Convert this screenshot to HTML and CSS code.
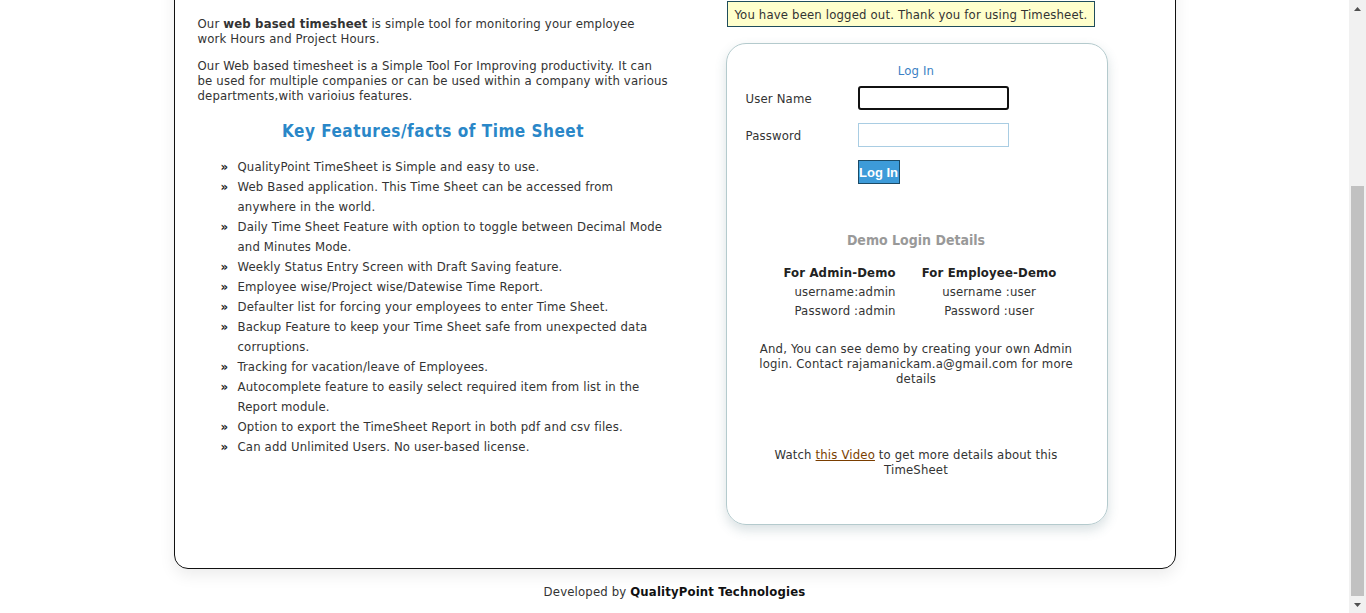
FILE: index.html
```html
<!DOCTYPE html>
<html lang="en">
<head>
<meta charset="utf-8">
<title>QualityPoint TimeSheet - Login</title>
<link rel="stylesheet" href="styles.css">
</head>
<body>
<div class="window">
  <div class="viewport">
    <div class="page">
      <main class="main-box">
        <section class="intro">
          <p class="para p1">Our <b>web based timesheet</b> is simple tool for monitoring your employee<br>work Hours and Project Hours.</p>
          <p class="para p2">Our Web based timesheet is a Simple Tool For Improving productivity. It can be used for multiple companies or can be used within a company with various departments,with varioius features.</p>
          <h2 class="features-title">Key Features/facts of Time Sheet</h2>
          <ul class="features">
            <li>QualityPoint TimeSheet is Simple and easy to use.</li>
            <li>Web Based application. This Time Sheet can be accessed from anywhere in the world.</li>
            <li>Daily Time Sheet Feature with option to toggle between Decimal Mode and Minutes Mode.</li>
            <li>Weekly Status Entry Screen with Draft Saving feature.</li>
            <li>Employee wise/Project wise/Datewise Time Report.</li>
            <li>Defaulter list for forcing your employees to enter Time Sheet.</li>
            <li>Backup Feature to keep your Time Sheet safe from unexpected data corruptions.</li>
            <li>Tracking for vacation/leave of Employees.</li>
            <li>Autocomplete feature to easily select required item from list in the Report module.</li>
            <li>Option to export the TimeSheet Report in both pdf and csv files.</li>
            <li>Can add Unlimited Users. No user-based license.</li>
          </ul>
        </section>
        <aside class="side">
          <div class="message">You have been logged out. Thank you for using Timesheet.</div>
          <div class="login-panel">
            <div class="login-title">Log In</div>
            <form class="login-form">
              <label class="field-label" for="user">User Name</label>
              <input class="field-input focused" id="user" type="text" autofocus>
              <label class="field-label" for="pass">Password</label>
              <input class="field-input" id="pass" type="password">
              <span></span>
              <button class="login-btn" type="button">Log In</button>
            </form>
            <div class="demo-title">Demo Login Details</div>
            <div class="demo-grid">
              <div class="demo-head">For Admin-Demo</div>
              <div class="demo-head">For Employee-Demo</div>
              <div class="demo-val admin">username:admin</div>
              <div class="demo-val emp">username :user</div>
              <div class="demo-val admin">Password :admin</div>
              <div class="demo-val emp">Password :user</div>
            </div>
            <p class="demo-note">And, You can see demo by creating your own Admin login. Contact rajamanickam.a@gmail.com for more details</p>
            <p class="demo-note watch">Watch <a href="#" class="video-link">this Video</a> to get more details about this TimeSheet</p>
          </div>
        </aside>
      </main>
      <footer class="site-footer">Developed by <b class="company">QualityPoint Technologies</b></footer>
    </div>
  </div>
  <div class="scrollbar" aria-hidden="true">
    <div class="sb-btn">
      <svg width="7" height="4" viewBox="0 0 7 4"><path d="M0 4L3.5 0L7 4z" fill="#505050"/></svg>
    </div>
    <div class="sb-track"><div class="sb-thumb"></div></div>
    <div class="sb-btn">
      <svg width="7" height="4" viewBox="0 0 7 4"><path d="M0 0L3.5 4L7 0z" fill="#505050"/></svg>
    </div>
  </div>
</div>
</body>
</html>
```
FILE: styles.css
```css
html, body {
  margin: 0;
  padding: 0;
  height: 100%;
}

body {
  font-family: "DejaVu Sans Condensed", "DejaVu Sans", Verdana, sans-serif;
  font-size: 13px;
  letter-spacing: 0.16px;
  color: #333;
  background: #fff;
}

.window {
  display: flex;
  height: 100vh;
}

.viewport {
  flex: 1 1 auto;
  min-width: 0;
  height: 100vh;
  overflow: hidden;
  display: flex;
  flex-direction: column-reverse;
}

.page {
  flex: 0 0 auto;
}

.scrollbar {
  flex: 0 0 17px;
  display: flex;
  flex-direction: column;
  background: #f1f1f1;
}

.sb-btn {
  height: 17px;
  display: flex;
  align-items: center;
  justify-content: center;
}

.sb-track {
  flex: 1 1 auto;
  display: flex;
  flex-direction: column;
  padding: 169px 2px 0;
}

.sb-thumb {
  flex: 1 1 auto;
  background: #c1c1c1;
}

.main-box {
  width: 910px;
  margin: 0 auto;
  border: 1px solid #111;
  border-radius: 14px;
  box-shadow: 0 6px 16px rgba(0, 0, 0, 0.08);
  padding: 62px 67px 43px 23px;
  display: flex;
  gap: 57px;
  box-sizing: content-box;
}

.intro {
  flex: 0 0 471px;
}

.para {
  line-height: 15px;
  margin: 12px 0 0;
}

.para.p1 {
  margin-top: 16px;
}

.features-title {
  margin: 18px 0 0;
  font-size: 17px;
  letter-spacing: 0.5px;
  line-height: 20px;
  color: #2a87c8;
  text-align: center;
}

.features {
  list-style: none;
  margin: 16px 0 0;
  padding: 0 0 0 40px;
}

.features li {
  display: flex;
  line-height: 20px;
}

.features li::before {
  content: "\00BB";
  flex: 0 0 17px;
  margin-left: -17px;
  font-weight: bold;
  color: #222;
}

.side {
  flex: 0 0 382px;
}

.message {
  display: inline-block;
  margin: 1px 0 0 1px;
  padding: 5px 7px 4px;
  line-height: 15px;
  background: #ffffcc;
  border: 1px solid #1f4d5c;
}

.login-panel {
  margin-top: 16px;
  height: 482px;
  box-sizing: border-box;
  border: 1px solid #b4cacd;
  border-radius: 20px;
  box-shadow: 0 5px 12px rgba(60, 100, 110, 0.2);
  padding: 19px 20px 0 19px;
  text-align: center;
}

.login-title {
  color: #3b7fc4;
  line-height: 16px;
}

.login-form {
  margin-top: 7px;
  display: grid;
  grid-template-columns: 112px 151px;
  grid-auto-rows: 24px;
  row-gap: 13px;
  align-items: center;
  text-align: left;
}

.field-label {
  line-height: 15px;
}

.field-input {
  box-sizing: border-box;
  width: 151px;
  height: 24px;
  border: 1px solid #a9cde3;
  padding: 2px 3px;
  font: inherit;
  outline: none;
  background: #fff;
}

.field-input.focused {
  border: 2px solid #111;
  border-radius: 3px;
}

.login-btn {
  justify-self: start;
  box-sizing: border-box;
  width: 42px;
  height: 24px;
  padding: 0;
  background: #3d9bd9;
  border: 1px solid #1b4a66;
  color: #fff;
  font-family: "Liberation Sans", Arial, sans-serif;
  font-weight: bold;
  font-size: 13px;
  letter-spacing: 0;
}

.demo-title {
  margin-top: 47px;
  font-size: 14px;
  letter-spacing: 0;
  line-height: 18px;
  font-weight: bold;
  color: #999;
}

.demo-grid {
  margin-top: 14px;
  padding-left: 8px;
  display: grid;
  grid-template-columns: auto auto;
  justify-content: center;
  column-gap: 26px;
  grid-auto-rows: 19px;
  line-height: 19px;
}

.demo-head {
  font-weight: bold;
  color: #222;
}

.demo-val.admin {
  text-align: right;
}

.demo-val.emp {
  text-align: center;
}

.demo-note {
  margin: 21px 0 0;
  line-height: 15px;
}

.demo-note.watch {
  margin-top: 61px;
}

.video-link {
  color: #7a3e00;
  text-decoration: underline;
}

.site-footer {
  height: 44px;
  line-height: 45px;
  text-align: center;
  color: #333;
}

.company {
  color: #111;
}
```
